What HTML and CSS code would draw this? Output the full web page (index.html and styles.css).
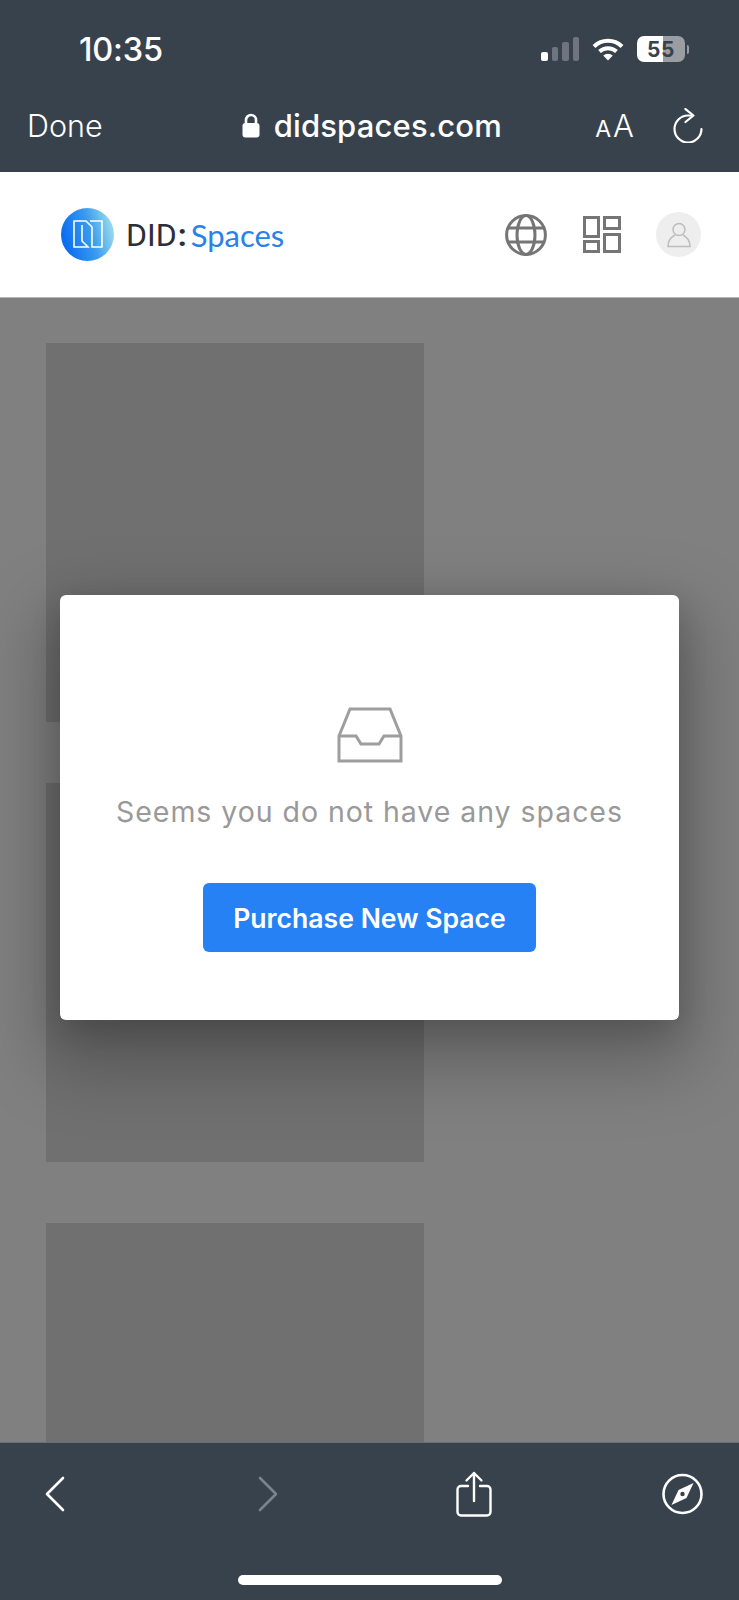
FILE: index.html
```html
<!DOCTYPE html>
<html lang="en">
<head>
    <meta charset="UTF-8">
    <meta name="viewport" content="width=device-width, initial-scale=1.0">
    <title>DID Spaces</title>
    <link rel="stylesheet" href="styles.css">
</head>
<body>
    <div class="browser-top">
        <div class="status-bar">
            <span class="clock">10:35</span>
            <div class="status-icons">
                <div class="signal">
                    <span class="bar bar-1 on"></span>
                    <span class="bar bar-2"></span>
                    <span class="bar bar-3"></span>
                    <span class="bar bar-4"></span>
                </div>
                <svg class="wifi" width="32" height="24" viewBox="0 0 32 24">
                    <path d="M2 9.5 A20 20 0 0 1 30 9.5" fill="none" stroke="#fff" stroke-width="4"/>
                    <path d="M7.5 14.5 A12.5 12.5 0 0 1 24.5 14.5" fill="none" stroke="#fff" stroke-width="4"/>
                    <path d="M11.2 18.6 A7 7 0 0 1 20.8 18.6 L16 23.5 Z" fill="#fff"/>
                </svg>
                <div class="battery">
                    <div class="battery-body"><span class="battery-num">55</span></div>
                    <span class="battery-nub"></span>
                </div>
            </div>
        </div>
        <div class="url-bar">
            <span class="done">Done</span>
            <div class="address">
                <svg width="18" height="25" viewBox="0 0 18 25">
                    <path d="M4 11 V7 A5 5 0 0 1 14 7 V11" fill="none" stroke="#fff" stroke-width="2.6"/>
                    <rect x="0.5" y="10" width="17" height="14.5" rx="3" fill="#fff"/>
                </svg>
                <span class="domain">didspaces.com</span>
            </div>
            <div class="reader"><span class="small-a">A</span><span class="big-a">A</span></div>
            <svg class="reload" width="30" height="35" viewBox="0 0 30 35">
                <path d="M19 7.5 H15 A13.5 13.5 0 1 0 28.5 21" fill="none" stroke="#fff" stroke-width="2.2" stroke-linecap="round"/>
                <path d="M12.5 1 L20.5 7.5 L12.5 14" fill="none" stroke="#fff" stroke-width="2.2" stroke-linecap="round" stroke-linejoin="round"/>
            </svg>
        </div>
    </div>

    <header class="site-header">
        <div class="brand">
            <svg class="brand-logo" width="53" height="53" viewBox="0 0 53 53">
                <defs>
                    <linearGradient id="logoFill" x1="0.05" y1="0.65" x2="1" y2="0.4">
                        <stop offset="0" stop-color="#0a6cf0"/>
                        <stop offset="0.55" stop-color="#3a9bf0"/>
                        <stop offset="1" stop-color="#9adcec"/>
                    </linearGradient>
                </defs>
                <circle cx="26.5" cy="26.5" r="26.5" fill="url(#logoFill)"/>
                <path d="M21 17 V33 L27 39 H13 V13 H25 L31 19 V39 H41 V13 H29" fill="none" stroke="#fff" stroke-width="1.6"/>
            </svg>
            <span class="brand-did">DID<span class="brand-colon">:</span></span><span class="brand-spaces">Spaces</span>
        </div>
        <div class="header-actions">
            <svg class="globe" width="42" height="42" viewBox="0 0 42 42" fill="none" stroke="#757575" stroke-width="3">
                <circle cx="21" cy="21" r="19.4"/>
                <ellipse cx="21" cy="21" rx="9" ry="19.4"/>
                <path d="M3 14 H39 M3 28 H39"/>
            </svg>
            <svg class="grid" width="38" height="37" viewBox="0 0 38 37" fill="none" stroke="#757575" stroke-width="3">
                <rect x="1.5" y="1.5" width="14" height="19"/>
                <rect x="21.5" y="1.5" width="15" height="11"/>
                <rect x="1.5" y="25.5" width="14" height="10"/>
                <rect x="21.5" y="18.5" width="15" height="17"/>
            </svg>
            <div class="avatar">
                <svg width="24" height="26" viewBox="0 0 24 26" fill="none" stroke="#bdbdbd" stroke-width="1.5">
                    <circle cx="12" cy="7.5" r="6"/>
                    <path d="M8 13 C4 15 1 18.5 1 24.5 H23 C23 18.5 20 15 16 13"/>
                </svg>
            </div>
        </div>
    </header>

    <main class="content">
        <div class="skeleton"></div>
        <div class="skeleton"></div>
        <div class="skeleton"></div>

        <div class="modal">
            <svg class="inbox" width="66" height="56" viewBox="0 0 66 56" fill="none" stroke="#9e9e9e" stroke-width="3">
                <path d="M2 29 L13 2 H53 L64 29 V54 H2 Z"/>
                <path d="M2 29 H19 L24 37 H42 L47 29 H64"/>
            </svg>
            <p class="modal-text">Seems you do not have any spaces</p>
            <button class="purchase-btn">Purchase New Space</button>
        </div>
    </main>

    <footer class="browser-bottom">
        <div class="toolbar">
            <svg width="20" height="36" viewBox="0 0 20 36" fill="none" stroke="#fff" stroke-width="2.6" stroke-linecap="round" stroke-linejoin="round">
                <path d="M18 2 L2 18 L18 34"/>
            </svg>
            <svg class="forward" width="20" height="36" viewBox="0 0 20 36" fill="none" stroke="#7b838c" stroke-width="2.6" stroke-linecap="round" stroke-linejoin="round">
                <path d="M2 2 L18 18 L2 34"/>
            </svg>
            <svg class="share" width="36" height="46" viewBox="0 0 36 46" fill="none" stroke="#fff" stroke-width="2.4" stroke-linecap="round" stroke-linejoin="round">
                <path d="M12 15 H5 A3.5 3.5 0 0 0 1.5 18.5 V41 A3.5 3.5 0 0 0 5 44.5 H31 A3.5 3.5 0 0 0 34.5 41 V18.5 A3.5 3.5 0 0 0 31 15 H24"/>
                <path d="M18 30 V2 M10.5 9.5 L18 2 L25.5 9.5"/>
            </svg>
            <svg class="compass" width="41" height="42" viewBox="0 0 41 42">
                <circle cx="20.5" cy="21" r="19" fill="none" stroke="#fff" stroke-width="2.6"/>
                <path fill-rule="evenodd" d="M31.5 10 L24.5 25 L9.5 32 L16.5 17 Z M20.5 18.8 A2.2 2.2 0 1 0 20.5 23.2 A2.2 2.2 0 1 0 20.5 18.8 Z" fill="#fff"/>
            </svg>
        </div>
        <div class="home-indicator"></div>
    </footer>
</body>
</html>
```

FILE: styles.css
```css
html, body {
    height: 100%;
}
body {
    display: flex;
    flex-direction: column;
    height: 1600px;
    margin: 0;
    overflow: hidden;
    font-family: Inter, "Liberation Sans", sans-serif;
    background-color: #808080;
}
.browser-top {
    height: 172px;
    flex: none;
    box-sizing: border-box;
    background-color: #38424c;
    color: white;
}
.status-bar {
    display: flex;
    justify-content: space-between;
    align-items: center;
    height: 98px;
    padding: 0 50px 0 79px;
}
.clock {
    font-size: 32.5px;
    font-weight: 500;
    letter-spacing: -0.2px;
}
.status-icons {
    display: flex;
    align-items: center;
    gap: 13px;
}
.signal {
    display: flex;
    align-items: flex-end;
    gap: 4px;
    height: 24px;
}
.bar {
    width: 6.5px;
    border-radius: 2px;
    background-color: #6e757e;
}
.bar.on {
    background-color: white;
}
.bar-1 { height: 9px; }
.bar-2 { height: 14px; }
.bar-3 { height: 19px; }
.bar-4 { height: 24px; }
.battery {
    display: flex;
    align-items: center;
    gap: 2px;
}
.battery-body {
    display: flex;
    justify-content: center;
    align-items: center;
    width: 48px;
    height: 26px;
    border-radius: 7px;
    background: linear-gradient(to right, #fff 54%, #9a9ea3 54%);
}
.battery-num {
    font-size: 21px;
    font-weight: 700;
    letter-spacing: 0.5px;
    color: #38424c;
}
.battery-nub {
    width: 2px;
    height: 9px;
    border-radius: 0 2px 2px 0;
    background-color: #9a9ea3;
}
.url-bar {
    display: flex;
    align-items: center;
    height: 54px;
    padding: 0 36px 0 27px;
}
.done {
    width: 215px;
    font-size: 30.5px;
    font-weight: 300;
}
.address {
    display: flex;
    align-items: center;
    gap: 14px;
    width: 354px;
}
.domain {
    font-size: 31px;
    font-weight: 500;
    letter-spacing: 0.15px;
}
.reader {
    display: flex;
    align-items: baseline;
    width: 78px;
    font-weight: 300;
}
.small-a {
    font-size: 23px;
    font-weight: 400;
    margin-right: 2px;
}
.big-a {
    font-size: 31px;
}
.site-header {
    display: flex;
    justify-content: space-between;
    align-items: center;
    height: 126px;
    flex: none;
    box-sizing: border-box;
    padding: 0 38px 0 61px;
    background-color: white;
    border-bottom: 1px solid #b5b5b5;
}
.brand {
    display: flex;
    align-items: center;
}
.brand-logo {
    margin-right: 12px;
}
.brand-did {
    font-family: Roboto, sans-serif;
    font-size: 32px;
    font-weight: 400;
    color: #2c2f3a;
}
.brand-colon {
    margin: 0 4px 0 1px;
    font-weight: 700;
}
.brand-spaces {
    font-family: Lato, sans-serif;
    font-size: 31px;
    color: #2a82e8;
}
.header-actions {
    display: flex;
    align-items: center;
    gap: 36px;
}
.grid {
    margin-right: -1px;
}
.avatar {
    display: flex;
    justify-content: center;
    align-items: center;
    width: 45px;
    height: 45px;
    border-radius: 50%;
    background-color: #eeeeee;
}
.content {
    position: relative;
    flex: 1;
    display: flex;
    flex-direction: column;
    gap: 61px;
    padding: 45px 0 0 46px;
    overflow: hidden;
    background-color: #808080;
}
.skeleton {
    flex: none;
    width: 378px;
    height: 379px;
    background-color: #707070;
}
.modal {
    position: absolute;
    top: 297px;
    left: 60px;
    width: 619px;
    height: 425px;
    box-sizing: border-box;
    display: flex;
    flex-direction: column;
    align-items: center;
    padding-top: 112px;
    border-radius: 6px;
    background-color: white;
    box-shadow: 0 30px 70px 15px rgba(0,0,0,0.26), 0 10px 30px rgba(0,0,0,0.14);
}
.modal-text {
    margin: 29px 0 0;
    font-size: 28.5px;
    font-weight: 400;
    line-height: 40px;
    letter-spacing: 0.95px;
    color: #999999;
    white-space: nowrap;
}
.purchase-btn {
    width: 333px;
    height: 69px;
    margin-top: 51px;
    border: none;
    border-radius: 6px;
    background-color: #2681f5;
    color: white;
    font-family: inherit;
    font-size: 26.6px;
    font-weight: 600;
}
.browser-bottom {
    height: 158px;
    flex: none;
    box-sizing: border-box;
    background-color: #38424c;
    border-top: 1px solid #6a6f75;
}
.toolbar {
    display: flex;
    align-items: center;
    height: 90px;
    padding: 12px 36px 0 45px;
    box-sizing: border-box;
}
.forward {
    margin-left: 193px;
}
.share {
    margin-left: 178px;
}
.compass {
    margin-left: auto;
}
.home-indicator {
    width: 264px;
    height: 10px;
    margin: 42px auto 0;
    border-radius: 5px;
    background-color: white;
}
```
